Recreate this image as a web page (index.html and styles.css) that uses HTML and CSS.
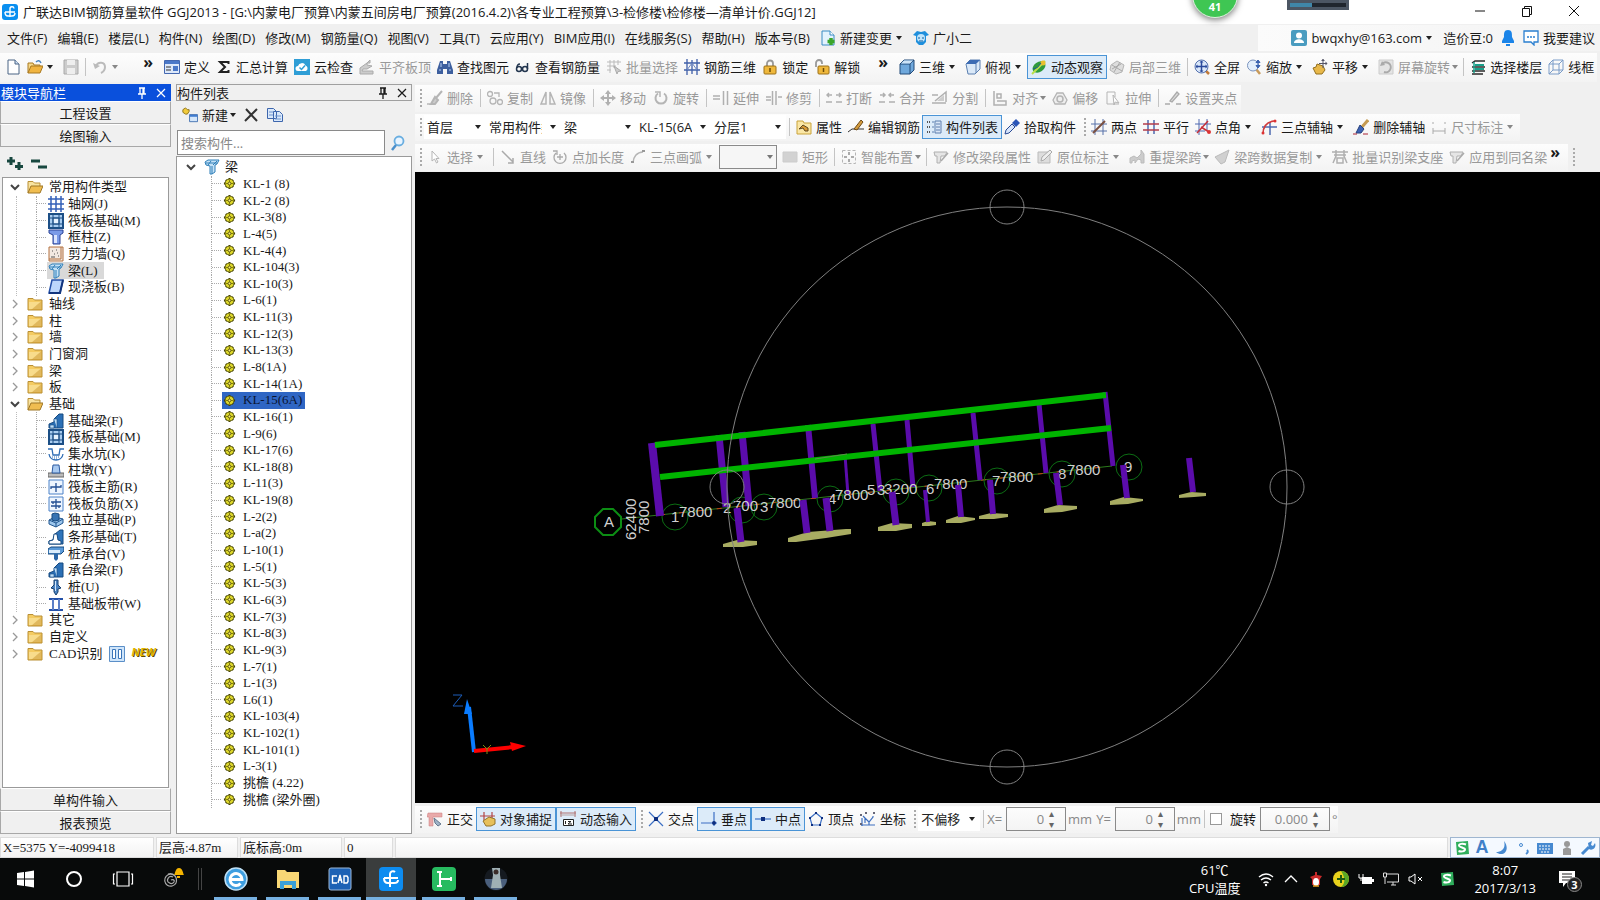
FILE: index.html
```html
<!DOCTYPE html>
<html lang="zh-CN">
<head>
    <meta charset="UTF-8">
    <meta name="viewport" content="width=device-width, initial-scale=1.0">
    <title>广联达BIM钢筋算量软件 GGJ2013</title>
    <link rel="stylesheet" href="styles.css">
</head>
<body>
    <!-- icon set -->
    <svg class="sprite" aria-hidden="true">
        <symbol id="logo" viewBox="0 0 16 16"><rect width="16" height="16" rx="3" fill="#0a8ff0"/><path d="M8 13V5a2 2 0 0 1 4-.5M3 8h10M3 8c0 3 1.5 4 3 4h4c2 0 3-1 3-3" fill="none" stroke="#fff" stroke-width="1.4"/></symbol>
        <symbol id="page" viewBox="0 0 16 16"><path d="M3 1h7l4 4v10H3z" fill="#fff" stroke="#4a6585"/><path d="M10 1v4h4" fill="#cfe0f5" stroke="#4a6585"/></symbol>
        <symbol id="pageadd" viewBox="0 0 16 16"><path d="M2 1h8l4 4v10H2z" fill="#e3f2fd" stroke="#3b8cc4"/><path d="M10 1v4h4" fill="#fff" stroke="#3b8cc4"/><path d="M11 8v7M7.5 11.5h7" stroke="#3aa52a" stroke-width="3.5"/></symbol>
        <symbol id="open" viewBox="0 0 16 16"><path d="M1 14V4h5l1 2h6v2" fill="#f7d98a" stroke="#a87820"/><path d="M1 14l3-7h12l-3 7z" fill="#f0b440" stroke="#a87820"/><path d="M9 3q3-3 5 1" fill="none" stroke="#4d86c0" stroke-width="1.5"/></symbol>
        <symbol id="folder" viewBox="0 0 16 16"><path d="M1 4V2.5h5L7.500 4H15v10H1z" fill="#f4cb62" stroke="#b98f35"/><path d="M2 6h12v7H2z" fill="#f8dc8c"/><path d="M14.5 5v9H4z" fill="#c8942e" opacity=".5"/></symbol>
        <symbol id="save" viewBox="0 0 16 16"><path d="M1 1h14v14H1z" fill="#ccc" stroke="#aaa"/><path d="M4 1h8v5H4zM4 9h8v6H4z" fill="#eee"/></symbol>
        <symbol id="undo" viewBox="0 0 16 16"><path d="M4 7c2-5 9-4 9 1 0 3-2 5-4 6" fill="none" stroke="#bbb" stroke-width="2"/><path d="M1 4l2 6 5-3z" fill="#bbb"/></symbol>
        <symbol id="define" viewBox="0 0 16 16"><path d="M.5 1.5h15v13H.5z" fill="#dce8fa" stroke="#4468b0"/><path d="M1 2h14v3H1z" fill="#4a78c8"/><path d="M2 8h5M2 11h5" stroke="#333"/><path d="M9 7h5v5H9z" fill="#4a78c8"/></symbol>
        <symbol id="sigma" viewBox="0 0 16 16"><path d="M12.5 5V3H4l5 5-5 5h8.500v-2" fill="none" stroke="#222" stroke-width="2"/></symbol>
        <symbol id="cloudcheck" viewBox="0 0 16 16"><path d="M0 0h16v16H0z" fill="#2f9ed6"/><path d="M4 12a2.5 2.5 0 0 1 0-5 4 4 0 0 1 7.5-.5A3 3 0 0 1 12 12z" fill="#fff"/><path d="M5.5 8.500l2 2 3.5-4" fill="none" stroke="#2f9ed6" stroke-width="1.5"/></symbol>
        <symbol id="aligntop" viewBox="0 0 16 16"><path d="M1 9l7-5 3-3v3H8v2l5 1-5 3H4l-1 2h11v3H1z" fill="#ccc" stroke="#aaa"/></symbol>
        <symbol id="binocular" viewBox="0 0 16 16"><path d="M3 2h3v3h4V2h3l3 9v4h-6v-5H6v5H0v-4z" fill="#3d5f9e"/><path d="M2 11h2M12 11h2M4 4v4M12 4v4" stroke="#b9d1f5"/></symbol>
        <symbol id="glasses" viewBox="0 0 16 16"><g fill="none" stroke="#23364f" stroke-width="1.5"><circle cx="4" cy="10" r="2.5"/><circle cx="10" cy="10" r="2.5"/><path d="M2 9c0-3 1-4 3-4M12.5 10V4"/></g></symbol>
        <symbol id="batch" viewBox="0 0 16 16"><path d="M1 3h14M1 7h9M4 1v13M8 1v8M12 1v5M1 11h4" stroke="#bbb" fill="none"/><path d="M8 7l7 5-3 .5L11 15z" fill="#ccc" stroke="#aaa"/></symbol>
        <symbol id="rebar" viewBox="0 0 16 16"><path d="M0 4h16M0 11h16M3 0v16M8 1v14M13 0v16" stroke="#3f5fa8" stroke-width="1.3"/><path d="M3 11l5-7 5 7" stroke="#6c86bf" fill="none"/></symbol>
        <symbol id="lock" viewBox="0 0 16 16"><path d="M5 8V4.500a3 3 0 0 1 6 0V8" fill="none" stroke="#999" stroke-width="1.8"/><rect x="2" y="7" width="12" height="8" rx="1" fill="#efb83c" stroke="#9c7018"/><path d="M8 9v4" stroke="#6d4c08" stroke-width="1.5"/></symbol>
        <symbol id="unlock" viewBox="0 0 16 16"><path d="M2 8V4a3 3 0 0 1 6 0v1" fill="none" stroke="#999" stroke-width="1.8"/><rect x="4" y="7" width="11" height="8" rx="1" fill="#efb83c" stroke="#9c7018"/><path d="M9.5 9v4" stroke="#6d4c08" stroke-width="1.5"/></symbol>
        <symbol id="cube" viewBox="0 0 16 16"><path d="M1 5l4-4h10v10l-4 4H1z" fill="#6fa8dc" stroke="#234a78"/><path d="M1 5h10v10M11 5l4-4" fill="none" stroke="#234a78"/><path d="M2 4.500l3-3h9l-3 3z" fill="#cde3f7"/></symbol>
        <symbol id="topview" viewBox="0 0 16 16"><path d="M1 5l4-4h10v9l-5 5H3z" fill="#dbe9f8" stroke="#5a7fb0"/><path d="M1 5l4-4h10l-4 4z" fill="#3d6cb4"/><path d="M11 5v9" stroke="#5a7fb0"/></symbol>
        <symbol id="orbit" viewBox="0 0 16 16"><ellipse cx="8" cy="8" rx="7" ry="5" fill="#2f9b3c" transform="rotate(-35 8 8)"/><path d="M1 15L14 2" stroke="#b9e04a" stroke-width="2"/><circle cx="12" cy="4" r="2.5" fill="#e9c02f"/><path d="M2 10q5 0 8-6" stroke="#1d5d8f" fill="none"/></symbol>
        <symbol id="partial" viewBox="0 0 16 16"><path d="M2 6l6-4 7 4-2 7-6 2-6-4z" fill="#ddd" stroke="#b5b5b5"/><path d="M3 6l10 6M5 13l6-10M3 10l9-5" stroke="#aaa"/></symbol>
        <symbol id="full" viewBox="0 0 16 16"><path d="M11 11l4 4" stroke="#c07a3a" stroke-width="2.5"/><circle cx="7.5" cy="7.500" r="6.5" fill="#dbe8fa" stroke="#5471ae"/><path d="M7.5 2v11M2 7.500h11" stroke="#2b4a9c" stroke-width="1.5"/><path d="M7.5 1.500l2 2h-4zM7.500 13.500l2-2h-4zM1.500 7.500l2-2v4zM13.500 7.500l-2-2v4z" fill="#2b4a9c"/></symbol>
        <symbol id="zoom" viewBox="0 0 16 16"><path d="M10 10l4 5" stroke="#c89a5a" stroke-width="2.5"/><circle cx="7" cy="6.500" r="5.5" fill="#e4effc" stroke="#7b93bd"/><path d="M12 2v6M12 1l2 2.500h-4zM12 9l2-2.500h-4z" fill="#3a62b0" stroke="#3a62b0"/></symbol>
        <symbol id="pan" viewBox="0 0 16 16"><path d="M1 9l3-1 1-3 6 2 2 4-3 4H4z" fill="#e8b84a" stroke="#94701f"/><path d="M11 0v9M7 4.500h8" stroke="#556"/><path d="M11 0l2 2H9zM15.500 4.500l-2-2v4z" fill="#556"/></symbol>
        <symbol id="screenrot" viewBox="0 0 16 16"><path d="M1 1h14v14H1z" fill="#e4e4e4" stroke="#ccc"/><path d="M4 5a5 5 0 1 1 2 8" fill="none" stroke="#aaa" stroke-width="2"/><path d="M2 7l2-5 3 4z" fill="#aaa"/></symbol>
        <symbol id="floors" viewBox="0 0 16 16"><path d="M2 4l3-2h10M2 8h13M2 12h13M2 15h11" stroke="#2b2b2b" stroke-width="1.5" fill="none"/><path d="M5 6h9M5 10h9" stroke="#19a08a" stroke-width="2"/><path d="M4 3v11" stroke="#19a08a" stroke-width="1.5"/></symbol>
        <symbol id="wire" viewBox="0 0 16 16"><path d="M1 5l4-4h10v10l-4 4H1zM1 5h10v10M11 5l4-4M5 1v10h10M5 11l-4 4" fill="none" stroke="#7a9cc8"/></symbol>
        <symbol id="brush" viewBox="0 0 16 16"><path d="M15 1L9 8M8 7l3 3-3 4H4z" fill="#ccc" stroke="#b5b5b5" stroke-width="2"/><path d="M0 14h3" stroke="#999"/></symbol>
        <symbol id="copy" viewBox="0 0 16 16"><g fill="none" stroke="#b5b5b5" stroke-width="1.3"><circle cx="3" cy="4" r="2.5"/><circle cx="6" cy="11" r="3"/><circle cx="13" cy="12" r="2.5"/><path d="M7 3h5v4"/></g></symbol>
        <symbol id="mirror" viewBox="0 0 16 16"><path d="M6 2v12H1zM10 2v12h5z" fill="none" stroke="#b5b5b5" stroke-width="1.5"/></symbol>
        <symbol id="move" viewBox="0 0 16 16"><path d="M8 3v10M3 8h10" stroke="#b0b0b0" stroke-width="2"/><path d="M8 0l3 4H5zM8 16l3-4H5zM0 8l4-3v6zM16 8l-4-3v6z" fill="#b0b0b0"/></symbol>
        <symbol id="rotate" viewBox="0 0 16 16"><path d="M11 3.500a5.5 5.5 0 1 1-6 0" fill="none" stroke="#b5b5b5" stroke-width="2"/><path d="M2 2h5v5" fill="none" stroke="#b5b5b5" stroke-width="1.5"/></symbol>
        <symbol id="extend" viewBox="0 0 16 16"><path d="M0 6h7M0 9h7" stroke="#b0b0b0" stroke-width="1.5"/><path d="M10.5 1v14M14.500 1v14" stroke="#b0b0b0" stroke-width="1.5"/></symbol>
        <symbol id="trim" viewBox="0 0 16 16"><path d="M6.5 1v14M10 1v14M0 7h5M12 7h4M0 10h5" stroke="#b0b0b0" stroke-width="1.5"/></symbol>
        <symbol id="break" viewBox="0 0 16 16"><path d="M0 12h6M10 12h6M1 5h5M10 5h5M3 3L1 5l2 2M13 3l2 2-2 2" stroke="#b0b0b0" fill="none" stroke-width="1.5"/></symbol>
        <symbol id="merge" viewBox="0 0 16 16"><path d="M0 12h6M10 12h6M1 5h5M10 5h5M4 3l2 2-2 2M12 3l-2 2 2 2" stroke="#b0b0b0" fill="none" stroke-width="1.5"/></symbol>
        <symbol id="split" viewBox="0 0 16 16"><path d="M0 5h6M0 13h14M3 11L14 2v10" stroke="#b0b0b0" fill="none" stroke-width="1.5"/><path d="M5 11l7-6v6z" fill="#ccc"/></symbol>
        <symbol id="align" viewBox="0 0 16 16"><path d="M2 1v14h12v-4H5M5 8V4h4v4z" stroke="#b0b0b0" fill="none" stroke-width="1.5"/></symbol>
        <symbol id="offset" viewBox="0 0 16 16"><path d="M5 3h6l4 7-2 4H3l-2-4z" fill="#eee" stroke="#b5b5b5" stroke-width="1.3"/><circle cx="8" cy="9" r="3" fill="none" stroke="#b5b5b5" stroke-width="1.5"/></symbol>
        <symbol id="stretch" viewBox="0 0 16 16"><path d="M2 14V2h8v5M2 14h12" stroke="#b5b5b5" fill="none"/><path d="M8 5l6 8-4-1-1 3z" fill="#fff" stroke="#b5b5b5"/></symbol>
        <symbol id="grippt" viewBox="0 0 16 16"><path d="M0 14h5M11 14h5M5 11L12 2l2 2-7 8z" stroke="#aaa" fill="#ddd" stroke-width="1.3"/></symbol>
        <symbol id="prop" viewBox="0 0 16 16"><path d="M1 2h6l1 2h7v11H1z" fill="#fbe7a6" stroke="#c9a33a"/><path d="M3 10l4-4 5 3v3H9L7 9z" fill="#d99a35" stroke="#5e4820"/></symbol>
        <symbol id="editbar" viewBox="0 0 16 16"><path d="M0 13l4-3h12" stroke="#333" fill="none"/><path d="M6 10l7-9 2 2-6 8z" fill="#d49b3c" stroke="#6d4a18"/></symbol>
        <symbol id="complist" viewBox="0 0 16 16"><path d="M1 3h3M1 8h3M1 13h3" stroke="#555" stroke-dasharray="1 1" stroke-width="2"/><path d="M9 2h6v12H9z" fill="#d9e6f7" stroke="#5d7fae"/><path d="M10 5h4M10 8h4M10 11h4M6 3h2M6 8h2M6 13h2" stroke="#5d7fae"/></symbol>
        <symbol id="picker" viewBox="0 0 16 16"><path d="M1 15l1-4 6-6 3 3-6 6z" fill="#d7e5fb" stroke="#2a4a94"/><path d="M8 4l4-4 4 4-4 4z" fill="#2a55b8"/></symbol>
        <symbol id="twopt" viewBox="0 0 16 16"><path d="M4 0v16M12 0v16M0 5h16M0 12h16" stroke="#5670a8"/><path d="M2 14L14 2" stroke="#7a5040" stroke-width="2"/></symbol>
        <symbol id="parallel" viewBox="0 0 16 16"><path d="M5 1v14M11 1v14" stroke="#4e69b0" stroke-width="1.5"/><path d="M0 5h16M0 11h16" stroke="#b33c4c" stroke-width="1.5"/></symbol>
        <symbol id="ptangle" viewBox="0 0 16 16"><path d="M4 0v16M12 0v11M0 5h16M0 12h10" stroke="#4e69b0"/><path d="M2 14L13 2M6 8l8 5" stroke="#c62f3a" stroke-width="1.5"/><circle cx="14" cy="13" r="2" fill="#d33"/></symbol>
        <symbol id="threept" viewBox="0 0 16 16"><path d="M9 3v13M1 8h15" stroke="#4e69b0" stroke-width="1.5"/><path d="M2 15C2 8 5 3 13 2" fill="none" stroke="#d03b3b" stroke-width="1.5"/><circle cx="14" cy="2" r="1.5" fill="#d33"/><circle cx="2" cy="14" r="1.5" fill="#d33"/></symbol>
        <symbol id="delaxis" viewBox="0 0 16 16"><path d="M15 1L9 8" stroke="#c59b53" stroke-width="3"/><path d="M7 6l4 4-3 4H3z" fill="#3e63b4" stroke="#26407c"/><path d="M0 15h4M10 15h5" stroke="#a23"/></symbol>
        <symbol id="dim" viewBox="0 0 16 16"><path d="M2 9v6M14 9v6M2 12h12M1 4h2M13 4h2" stroke="#aaa" fill="none"/></symbol>
        <symbol id="cursor" viewBox="0 0 16 16"><path d="M5 2v10l2.500-2 2 4 1.500-1-2-3.500h3z" fill="#fff" stroke="#b5b5b5"/></symbol>
        <symbol id="line" viewBox="0 0 16 16"><path d="M2 2l11 11M13 9v5H8" fill="none" stroke="#aaa" stroke-width="1.5"/></symbol>
        <symbol id="ptlen" viewBox="0 0 16 16"><path d="M4 4a6 6 0 1 0 8 0M8 5v6M5 8h6M1 2h4v4" fill="none" stroke="#aaa" stroke-width="1.3"/></symbol>
        <symbol id="arc" viewBox="0 0 16 16"><path d="M3 14C3 8 7 3 13 3" fill="none" stroke="#b5b5b5" stroke-width="1.5"/><path d="M1 13h3M12 2h3" stroke="#999" stroke-width="2"/></symbol>
        <symbol id="rect" viewBox="0 0 16 16"><path d="M1 3h14v10H1z" fill="#d2d2d2" stroke="#ccc"/></symbol>
        <symbol id="smart" viewBox="0 0 16 16"><path d="M1.5 1.500h13v13h-13z" fill="none" stroke="#b5b5b5" stroke-dasharray="3 2"/><path d="M8 3v3M8 10v3M3 8h3M10 8h3" stroke="#aaa" stroke-width="2"/></symbol>
        <symbol id="beamg" viewBox="0 0 16 16"><path d="M1 3h13l-2 4H8l-1 7H4V7H2z" fill="#e5e5e5" stroke="#b0b0b0"/><path d="M8 12l7-8" stroke="#aaa" stroke-width="1.5"/></symbol>
        <symbol id="note" viewBox="0 0 16 16"><path d="M1 3h12v11H1z" fill="#ddd" stroke="#bbb"/><path d="M4 12l1-4 8-7 2 2-8 8z" fill="#eee" stroke="#aaa"/></symbol>
        <symbol id="span" viewBox="0 0 16 16"><path d="M1 14V9l4-2 3 2 4-4V1l3 4v9h-3v-3l-3-1-3 4v-3l-3 1v2z" fill="#ccc" stroke="#bbb"/></symbol>
        <symbol id="spancopy" viewBox="0 0 16 16"><path d="M15 1l-4 12-4 2-6-7 4-2z" fill="#d0d0d0" stroke="#bbb"/></symbol>
        <symbol id="support" viewBox="0 0 16 16"><path d="M0 3h16M4 1v6l-3 7M12 1v6l3 7M5 9h6v5H5zM2 6h12" fill="none" stroke="#b0b0b0" stroke-width="1.5"/></symbol>
        <symbol id="ortho" viewBox="0 0 16 16"><path d="M1 2h14v4H6v9H2V6H0z" fill="#e9aaaa" stroke="#c87878" stroke-width=".5"/><path d="M7 7l7 6-3 2-3-3z" fill="#9fb3c8" stroke="#65788e"/></symbol>
        <symbol id="snap" viewBox="0 0 16 16"><path d="M0 5h15M4 1v8M12 1v6" stroke="#b34545" stroke-width="1.2"/><path d="M3 10l6-4 6 2v5l-4 2H6z" fill="#e7c05a" stroke="#94742b"/></symbol>
        <symbol id="dyninput" viewBox="0 0 16 16"><path d="M0 2h16M1 0v6M15 0v6" stroke="#b07070"/><path d="M0 4h16" stroke="#b9a0a0"/><path d="M3.5 8.500h10v6h-10z" fill="#fff" stroke="#222"/><path d="M5.5 10v3M8 10.500h3l-3 2.500h4" stroke="#222" fill="none"/></symbol>
        <symbol id="xpt" viewBox="0 0 16 16"><path d="M1 1l14 14M15 1L1 15" stroke="#3c6fc4" stroke-width="1.2"/><path d="M6 6h4v4H6z" fill="#0e2f80"/></symbol>
        <symbol id="perp" viewBox="0 0 16 16"><path d="M13 1v14M0 12h16" stroke="#3c6fc4" stroke-width="1.2"/><circle cx="13" cy="12" r="2" fill="#0e2f80"/></symbol>
        <symbol id="midpt" viewBox="0 0 16 16"><path d="M0 8h16" stroke="#3c6fc4" stroke-width="1.2"/><path d="M6 6h4v4H6z" fill="#0e2f80"/></symbol>
        <symbol id="vertex" viewBox="0 0 16 16"><path d="M8 2l6 5-2 7H4L2 7z" fill="none" stroke="#3c6fc4" stroke-width="1.2"/><path d="M7 1h2v2H7zM13 6h2v2h-2zM1 6h2v2H1zM3 13h2v2H3zM11 13h2v2h-2z" fill="#0e2f80"/></symbol>
        <symbol id="coord" viewBox="0 0 16 16"><path d="M2 7v8M1 14h14M5 12V7l4 4 4-5v-1M9 11v3M5 7l-2-2" stroke="#3d6fc0" fill="none" stroke-width="1.2"/><path d="M5 1h2v2H5zM13 1h2v2h-2zM0 3h2v2H0zM0 12h2v2H0z" fill="#667"/></symbol>
        <symbol id="new" viewBox="0 0 18 16"><path d="M4 0l2 2h2v2L6 7H4L1 5V2z" fill="#f2cb3b" stroke="#8a6d10"/><path d="M8.5 7.500h9v8h-9z" fill="#d4e6fa" stroke="#3e6caf"/><path d="M9 8h8v2H9z" fill="#3e7bd0"/></symbol>
        <symbol id="cross" viewBox="0 0 16 16"><path d="M3 2l11 12M14 2L2 14" stroke="#333" stroke-width="2"/></symbol>
        <symbol id="docs" viewBox="0 0 16 16"><path d="M.5 1.500h6l3 3v7h-9zM6.500 4.500h6l3 3v7h-9z" fill="#d9e8fb" stroke="#3d66ad"/><path d="M8 9h6M8 12h6M2 5h4M2 8h4" stroke="#6d93cf"/></symbol>
        <symbol id="search" viewBox="0 0 16 16"><circle cx="9" cy="6" r="4.5" fill="#e8f4ff" stroke="#6aaee0" stroke-width="1.8"/><path d="M6 10l-4 5" stroke="#4a8fcb" stroke-width="2.5"/></symbol>
        <symbol id="pin" viewBox="0 0 12 12"><path d="M3 1h6M4 1v6M8 1v6M7 1v6M2 7h8M6 7v5" stroke="currentColor" stroke-width="1.3"/></symbol>
        <symbol id="close" viewBox="0 0 12 12"><path d="M2 2l8 8M10 2l-8 8" stroke="currentColor" stroke-width="1.2"/></symbol>
        <symbol id="plus2" viewBox="0 0 18 16"><path d="M5 1v8M1 5h8M13 6v8M9 10.500h8" stroke="#17473f" stroke-width="3"/></symbol>
        <symbol id="minus2" viewBox="0 0 18 16"><path d="M1 5h9M8 11h9" stroke="#17473f" stroke-width="3"/></symbol>
        <symbol id="open2" viewBox="0 0 16 16"><path d="M1 14V2.500h5L7.500 4H13v3" fill="#f8e3a0" stroke="#b98f35"/><path d="M1 14l3-7h12l-3 7z" fill="#f0bd50" stroke="#9e7626"/></symbol>
        <symbol id="down" viewBox="0 0 10 10"><path d="M1 3l4 4 4-4" fill="none" stroke="#444" stroke-width="2"/></symbol>
        <symbol id="right" viewBox="0 0 10 10"><path d="M3 1l4 4-4 4" fill="none" stroke="#999" stroke-width="1.3"/></symbol>
        <symbol id="gear" viewBox="0 0 14 14"><path d="M7 1v12M1 7h12M3 3l8 8M11 3l-8 8" stroke="#3a3a00" stroke-width="2"/><circle cx="7" cy="7" r="4.800" fill="#dcd62a" stroke="#55520a"/><path d="M7 3v8M3 7h8" stroke="#6a6600" stroke-width=".8"/><circle cx="7" cy="7" r="1.5" fill="#fff27a" stroke="#55520a"/></symbol>
        <symbol id="beam" viewBox="0 0 16 16"><path d="M1 3l3-2h11l-2 4-2 1v7l-3 2H6V7L2 6z" fill="#c5e2f7" stroke="#2f7fb8"/><path d="M2 4h11M8 7v8M4 6l3-4M9 6l4-4" stroke="#2f7fb8"/></symbol>
        <symbol id="grid" viewBox="0 0 16 16"><path d="M0 3h16M0 8h16M0 13h16M3 0v16M8 0v16M13 0v16" stroke="#3460b8" stroke-width="1.5"/></symbol>
        <symbol id="raft" viewBox="0 0 16 16"><path d="M1 1h14v14H1z" fill="#a9cdf0" stroke="#1c4f86" stroke-width="2"/><path d="M5 5h6v6H5zM5 2v12M11 2v12M2 5h12M2 11h12" fill="#e7f3ff" stroke="#1c4f86"/></symbol>
        <symbol id="column" viewBox="0 0 16 16"><path d="M1 1h14v3l-3 2v9H5V6L1 4z" fill="#7a9ae8" stroke="#2c4496"/><path d="M6 6h3v8H6z" fill="#dbe5ff"/></symbol>
        <symbol id="wall" viewBox="0 0 16 16"><path d="M1 1h14v14H1z" fill="#f2e9e2" stroke="#b3713f"/><path d="M13 1v12H1" stroke="#b3713f" fill="none"/><path d="M4 5h1M8 4h1M6 8h1M10 10h1M3 11h4M9 7h1" stroke="#555"/></symbol>
        <symbol id="slab" viewBox="0 0 16 16"><path d="M4 1h11l-3 13H1z" fill="#bcd6fb" stroke="#2450a8" stroke-width="1.5"/><path d="M1 14h11l3-13" fill="none" stroke="#12357e" stroke-width="2"/></symbol>
        <symbol id="fbeam" viewBox="0 0 16 16"><path d="M1 15v-4l5-2V6l5-5h4v14z" fill="#2b6fb5" stroke="#174a80"/><path d="M6 6h3v9M2 12h4v3H2z" fill="#bfe0fa" stroke="#174a80" stroke-width=".6"/></symbol>
        <symbol id="pit" viewBox="0 0 16 16"><path d="M0 3h4l1 6h6l1-6h4M1 8c1 8 13 8 14 0" fill="none" stroke="#2f6db5" stroke-width="1.3"/><path d="M4 11h8M6 13h4" stroke="#2f6db5" stroke-dasharray="1 1"/></symbol>
        <symbol id="pier" viewBox="0 0 16 16"><path d="M0 11h16v4H0z" fill="#bbb" stroke="#666"/><path d="M5 3h6l1 8H4z" fill="#a8c9f0" stroke="#2c5aa0"/></symbol>
        <symbol id="main" viewBox="0 0 16 16"><path d="M1 1h14v14H1z" fill="#eef6ff" stroke="#4d82c8"/><path d="M8 4v9M3 10V8h10V6" stroke="#234f94" fill="none" stroke-width="1.3"/></symbol>
        <symbol id="neg" viewBox="0 0 16 16"><path d="M1 1h14v14H1z" fill="#eef6ff" stroke="#4d82c8"/><path d="M8 3v10M3 6h10M3 10h10M5 6v2M11 10v2" stroke="#234f94" fill="none" stroke-width="1.3"/></symbol>
        <symbol id="indep" viewBox="0 0 16 16"><path d="M1 8l6-3 8 2v4l-7 4-7-3z" fill="#9cc6ec" stroke="#1f558f"/><path d="M4 2l3-1 4 1v6l-4 1-3-1z" fill="#3673b3" stroke="#174a80"/><path d="M1 8l7 3 7-4M8 11v4" fill="none" stroke="#1f558f"/></symbol>
        <symbol id="strip" viewBox="0 0 16 16"><path d="M1 15v-3l4-1 2-6 5-4h3v14z" fill="#2f74ba" stroke="#174a80"/><path d="M1 15v-3l4-1 1-6h3l1 6 3 1v3z" fill="#fff" stroke="#174a80"/></symbol>
        <symbol id="cap" viewBox="0 0 16 16"><path d="M0 3l3-2h13v4l-3 3H0z" fill="#5b9ad8" stroke="#174a80"/><path d="M1 4h11v3H1z" fill="#d9ecfc"/><path d="M6 8h4v5l-2 2-2-2z" fill="#2b67a8"/></symbol>
        <symbol id="pile" viewBox="0 0 16 16"><path d="M6 1h4v5l3 3-3 1v3l-2 3-2-3v-3L3 9l3-3z" fill="#4c83c0" stroke="#17406f"/><path d="M7.5 2v10" stroke="#d3e8fb"/></symbol>
        <symbol id="band" viewBox="0 0 16 16"><path d="M1 3h14M1 14h14" stroke="#2450a8" stroke-width="2"/><path d="M5 3v11M11 3v11" stroke="#5b7fc8" stroke-width="2"/></symbol>
        <symbol id="sogou" viewBox="0 0 16 16"><path d="M2 2l12-1 1 13-12 1z" fill="#2fae5c"/><path d="M12 4.500c-3-1-7-1-7 1s6 2 6 4-4 2.500-6.500 1.500" fill="none" stroke="#fff" stroke-width="2"/></symbol>
    </svg>

    <div class="window">
        <header class="titlebar">
            <svg class="icon"><use href="#logo"/></svg>
            <h1>广联达BIM钢筋算量软件 GGJ2013 - [G:\内蒙电厂预算\内蒙五间房电厂预算(2016.4.2)\各专业工程预算\3-检修楼\检修楼—清单计价.GGJ12]</h1>
            <div class="ball">41</div>
            <div class="gauge"></div>
            <div class="winbuttons">
                <button aria-label="最小化"><svg viewBox="0 0 12 12"><path d="M1 6h10" stroke="#111"/></svg></button>
                <button aria-label="还原"><svg viewBox="0 0 12 12"><path d="M1.5 3.500h7v8h-7zM3.500 3V1.500h7v8H9" fill="none" stroke="#111"/></svg></button>
                <button aria-label="关闭"><svg viewBox="0 0 12 12"><path d="M1 1l10 10M11 1L1 11" stroke="#111"/></svg></button>
            </div>
        </header>

        <nav class="menubar">
            <button>文件(F)</button><button>编辑(E)</button><button>楼层(L)</button><button>构件(N)</button><button>绘图(D)</button><button>修改(M)</button><button>钢筋量(Q)</button><button>视图(V)</button><button>工具(T)</button><button>云应用(Y)</button><button>BIM应用(I)</button><button>在线服务(S)</button><button>帮助(H)</button><button>版本号(B)</button>
            <button class="tool"><svg class="icon"><use href="#pageadd"/></svg>新建变更<i class="arrow"></i></button>
            <button class="tool"><svg class="icon" viewBox="0 0 16 16"><path d="M0 5l4-4 4 1 4-1 4 4-3 1v6l-3 3H6l-3-3V6z" fill="#1f8fdc"/><circle cx="8" cy="8" r="4" fill="#bfe4fb"/><path d="M6 7v2M10 7v2M6 11h4" stroke="#0d5d9c"/></svg>广小二</button>
            <div class="account">
                <button class="tool"><svg class="icon" viewBox="0 0 16 16"><rect width="16" height="16" rx="2" fill="#4a9cc0"/><circle cx="8" cy="5.500" r="3" fill="#fff"/><path d="M3 13c0-5 10-5 10 0z" fill="#fff"/></svg>bwqxhy@163.com<i class="arrow"></i></button>
                <button class="tool">造价豆:0</button>
                <button class="tool" aria-label="消息"><svg class="icon" viewBox="0 0 16 16"><path d="M8 0c4 0 4 3 4 7l2 4v2H2v-2l2-4c0-4 0-7 4-7zM6 14h4v2H6z" fill="#1b84e8"/></svg></button>
                <button class="tool"><svg class="icon" viewBox="0 0 16 16"><path d="M1 1h14v11h-4v3l-3-3H1z" fill="#fff" stroke="#2a7fd0" stroke-width="1.3"/><path d="M4 7h8" stroke="#2a7fd0" stroke-width="1.5" stroke-dasharray="2 1"/></svg>我要建议</button>
            </div>
        </nav>

        <div class="toolbar top">
            <div class="group file">
                <button class="tool" aria-label="新建"><svg class="icon"><use href="#page"/></svg></button>
                <button class="tool" aria-label="打开"><svg class="icon"><use href="#open"/></svg><i class="arrow"></i></button>
                <button class="tool" aria-label="保存" disabled><svg class="icon"><use href="#save"/></svg></button>
                <span class="sep"></span>
                <button class="tool" aria-label="撤销" disabled><svg class="icon"><use href="#undo"/></svg><i class="arrow"></i></button>
                <span class="more">»</span>
            </div>
            <div class="group common">
                <button class="tool"><svg class="icon"><use href="#define"/></svg>定义</button>
                <button class="tool"><svg class="icon"><use href="#sigma"/></svg>汇总计算</button>
                <button class="tool"><svg class="icon"><use href="#cloudcheck"/></svg>云检查</button>
                <button class="tool" disabled><svg class="icon"><use href="#aligntop"/></svg>平齐板顶</button>
                <button class="tool"><svg class="icon"><use href="#binocular"/></svg>查找图元</button>
                <button class="tool"><svg class="icon"><use href="#glasses"/></svg>查看钢筋量</button>
                <button class="tool" disabled><svg class="icon"><use href="#batch"/></svg>批量选择</button>
                <button class="tool"><svg class="icon"><use href="#rebar"/></svg>钢筋三维</button>
                <button class="tool"><svg class="icon"><use href="#lock"/></svg>锁定</button>
                <button class="tool"><svg class="icon"><use href="#unlock"/></svg>解锁</button>
                <span class="more">»</span>
            </div>
            <div class="group">
                <button class="tool"><svg class="icon"><use href="#cube"/></svg>三维<i class="arrow"></i></button>
                <button class="tool"><svg class="icon"><use href="#topview"/></svg>俯视<i class="arrow"></i></button>
                <button class="tool active"><svg class="icon"><use href="#orbit"/></svg>动态观察</button>
                <button class="tool" disabled><svg class="icon"><use href="#partial"/></svg>局部三维</button>
                <span class="sep"></span>
                <button class="tool"><svg class="icon"><use href="#full"/></svg>全屏</button>
                <button class="tool"><svg class="icon"><use href="#zoom"/></svg>缩放<i class="arrow"></i></button>
                <button class="tool"><svg class="icon"><use href="#pan"/></svg>平移<i class="arrow"></i></button>
                <button class="tool" disabled><svg class="icon"><use href="#screenrot"/></svg>屏幕旋转<i class="arrow tight"></i></button>
                <span class="sep"></span>
                <button class="tool"><svg class="icon"><use href="#floors"/></svg>选择楼层</button>
                <button class="tool"><svg class="icon"><use href="#wire"/></svg>线框</button>
            </div>
        </div>

        <main>
            <aside class="panel nav">
                <div class="panel-head blue"><span>模块导航栏</span><svg><use href="#pin"/></svg><svg><use href="#close"/></svg></div>
                <button class="section">工程设置</button>
                <button class="section">绘图输入</button>
                <div class="nav-tools">
                    <button aria-label="全部展开"><svg><use href="#plus2"/></svg></button>
                    <button aria-label="全部折叠"><svg><use href="#minus2"/></svg></button>
                </div>
                <ul class="tree nav-tree">
                    <li><svg class="caret"><use href="#down"/></svg><svg class="icon"><use href="#open2"/></svg>常用构件类型</li>
                    <li class="child"><span><svg class="icon"><use href="#grid"/></svg>轴网(J)</span></li>
                    <li class="child"><span><svg class="icon"><use href="#raft"/></svg>筏板基础(M)</span></li>
                    <li class="child"><span><svg class="icon"><use href="#column"/></svg>框柱(Z)</span></li>
                    <li class="child"><span><svg class="icon"><use href="#wall"/></svg>剪力墙(Q)</span></li>
                    <li class="child current"><span><svg class="icon"><use href="#beam"/></svg>梁(L)</span></li>
                    <li class="child last"><span><svg class="icon"><use href="#slab"/></svg>现浇板(B)</span></li>
                    <li><svg class="caret"><use href="#right"/></svg><svg class="icon"><use href="#folder"/></svg>轴线</li>
                    <li><svg class="caret"><use href="#right"/></svg><svg class="icon"><use href="#folder"/></svg>柱</li>
                    <li><svg class="caret"><use href="#right"/></svg><svg class="icon"><use href="#folder"/></svg>墙</li>
                    <li><svg class="caret"><use href="#right"/></svg><svg class="icon"><use href="#folder"/></svg>门窗洞</li>
                    <li><svg class="caret"><use href="#right"/></svg><svg class="icon"><use href="#folder"/></svg>梁</li>
                    <li><svg class="caret"><use href="#right"/></svg><svg class="icon"><use href="#folder"/></svg>板</li>
                    <li><svg class="caret"><use href="#down"/></svg><svg class="icon"><use href="#open2"/></svg>基础</li>
                    <li class="child"><span><svg class="icon"><use href="#fbeam"/></svg>基础梁(F)</span></li>
                    <li class="child"><span><svg class="icon"><use href="#raft"/></svg>筏板基础(M)</span></li>
                    <li class="child"><span><svg class="icon"><use href="#pit"/></svg>集水坑(K)</span></li>
                    <li class="child"><span><svg class="icon"><use href="#pier"/></svg>柱墩(Y)</span></li>
                    <li class="child"><span><svg class="icon"><use href="#main"/></svg>筏板主筋(R)</span></li>
                    <li class="child"><span><svg class="icon"><use href="#neg"/></svg>筏板负筋(X)</span></li>
                    <li class="child"><span><svg class="icon"><use href="#indep"/></svg>独立基础(P)</span></li>
                    <li class="child"><span><svg class="icon"><use href="#strip"/></svg>条形基础(T)</span></li>
                    <li class="child"><span><svg class="icon"><use href="#cap"/></svg>桩承台(V)</span></li>
                    <li class="child"><span><svg class="icon"><use href="#fbeam"/></svg>承台梁(F)</span></li>
                    <li class="child"><span><svg class="icon"><use href="#pile"/></svg>桩(U)</span></li>
                    <li class="child last"><span><svg class="icon"><use href="#band"/></svg>基础板带(W)</span></li>
                    <li><svg class="caret"><use href="#right"/></svg><svg class="icon"><use href="#folder"/></svg>其它</li>
                    <li><svg class="caret"><use href="#right"/></svg><svg class="icon"><use href="#folder"/></svg>自定义</li>
                    <li><svg class="caret"><use href="#right"/></svg><svg class="icon"><use href="#folder"/></svg>CAD识别<svg class="icon cad" viewBox="0 0 16 16"><path d="M.5.5h15v15H.5z" fill="#cfe5fa" stroke="#5b8fc8"/><path d="M3.5 3.500h3v9h-3zM9.500 3.500h3v9h-3z" fill="#fff" stroke="#3a74b8"/></svg><b class="new">NEW</b></li>
                </ul>
                <button class="section">单构件输入</button>
                <button class="section">报表预览</button>
            </aside>

            <aside class="panel list">
                <div class="panel-head"><span>构件列表</span><svg><use href="#pin"/></svg><svg><use href="#close"/></svg></div>
                <div class="list-tools">
                    <button class="tool"><svg class="icon"><use href="#new"/></svg>新建<i class="arrow tight"></i></button>
                    <button class="tool" aria-label="删除"><svg class="icon"><use href="#cross"/></svg></button>
                    <button class="tool" aria-label="复制"><svg class="icon"><use href="#docs"/></svg></button>
                </div>
                <div class="search">
                    <input type="text" placeholder="搜索构件..." aria-label="搜索构件">
                    <button aria-label="搜索"><svg class="icon"><use href="#search"/></svg></button>
                </div>
                <ul class="tree list-tree">
                    <li><svg class="caret"><use href="#down"/></svg><svg class="icon"><use href="#beam"/></svg>梁</li>
                    <li class="child"><span><svg class="gear"><use href="#gear"/></svg>KL-1 (8)</span></li>
                    <li class="child"><span><svg class="gear"><use href="#gear"/></svg>KL-2 (8)</span></li>
                    <li class="child"><span><svg class="gear"><use href="#gear"/></svg>KL-3(8)</span></li>
                    <li class="child"><span><svg class="gear"><use href="#gear"/></svg>L-4(5)</span></li>
                    <li class="child"><span><svg class="gear"><use href="#gear"/></svg>KL-4(4)</span></li>
                    <li class="child"><span><svg class="gear"><use href="#gear"/></svg>KL-104(3)</span></li>
                    <li class="child"><span><svg class="gear"><use href="#gear"/></svg>KL-10(3)</span></li>
                    <li class="child"><span><svg class="gear"><use href="#gear"/></svg>L-6(1)</span></li>
                    <li class="child"><span><svg class="gear"><use href="#gear"/></svg>KL-11(3)</span></li>
                    <li class="child"><span><svg class="gear"><use href="#gear"/></svg>KL-12(3)</span></li>
                    <li class="child"><span><svg class="gear"><use href="#gear"/></svg>KL-13(3)</span></li>
                    <li class="child"><span><svg class="gear"><use href="#gear"/></svg>L-8(1A)</span></li>
                    <li class="child"><span><svg class="gear"><use href="#gear"/></svg>KL-14(1A)</span></li>
                    <li class="child selected"><span><svg class="gear"><use href="#gear"/></svg>KL-15(6A)</span></li>
                    <li class="child"><span><svg class="gear"><use href="#gear"/></svg>KL-16(1)</span></li>
                    <li class="child"><span><svg class="gear"><use href="#gear"/></svg>L-9(6)</span></li>
                    <li class="child"><span><svg class="gear"><use href="#gear"/></svg>KL-17(6)</span></li>
                    <li class="child"><span><svg class="gear"><use href="#gear"/></svg>KL-18(8)</span></li>
                    <li class="child"><span><svg class="gear"><use href="#gear"/></svg>L-11(3)</span></li>
                    <li class="child"><span><svg class="gear"><use href="#gear"/></svg>KL-19(8)</span></li>
                    <li class="child"><span><svg class="gear"><use href="#gear"/></svg>L-2(2)</span></li>
                    <li class="child"><span><svg class="gear"><use href="#gear"/></svg>L-a(2)</span></li>
                    <li class="child"><span><svg class="gear"><use href="#gear"/></svg>L-10(1)</span></li>
                    <li class="child"><span><svg class="gear"><use href="#gear"/></svg>L-5(1)</span></li>
                    <li class="child"><span><svg class="gear"><use href="#gear"/></svg>KL-5(3)</span></li>
                    <li class="child"><span><svg class="gear"><use href="#gear"/></svg>KL-6(3)</span></li>
                    <li class="child"><span><svg class="gear"><use href="#gear"/></svg>KL-7(3)</span></li>
                    <li class="child"><span><svg class="gear"><use href="#gear"/></svg>KL-8(3)</span></li>
                    <li class="child"><span><svg class="gear"><use href="#gear"/></svg>KL-9(3)</span></li>
                    <li class="child"><span><svg class="gear"><use href="#gear"/></svg>L-7(1)</span></li>
                    <li class="child"><span><svg class="gear"><use href="#gear"/></svg>L-1(3)</span></li>
                    <li class="child"><span><svg class="gear"><use href="#gear"/></svg>L6(1)</span></li>
                    <li class="child"><span><svg class="gear"><use href="#gear"/></svg>KL-103(4)</span></li>
                    <li class="child"><span><svg class="gear"><use href="#gear"/></svg>KL-102(1)</span></li>
                    <li class="child"><span><svg class="gear"><use href="#gear"/></svg>KL-101(1)</span></li>
                    <li class="child"><span><svg class="gear"><use href="#gear"/></svg>L-3(1)</span></li>
                    <li class="child"><span><svg class="gear"><use href="#gear"/></svg>挑檐 (4.22)</span></li>
                    <li class="child last"><span><svg class="gear"><use href="#gear"/></svg>挑檐 (梁外圈)</span></li>
                </ul>
            </aside>

            <section class="work">
                <div class="toolbar edit">
                    <div class="group">
                        <span class="grip"></span>
                        <button class="tool" disabled><svg class="icon"><use href="#brush"/></svg>删除</button>
                        <span class="sep"></span>
                        <button class="tool" disabled><svg class="icon"><use href="#copy"/></svg>复制</button>
                        <button class="tool" disabled><svg class="icon"><use href="#mirror"/></svg>镜像</button>
                        <span class="sep"></span>
                        <button class="tool" disabled><svg class="icon"><use href="#move"/></svg>移动</button>
                        <button class="tool" disabled><svg class="icon"><use href="#rotate"/></svg>旋转</button>
                        <span class="sep"></span>
                        <button class="tool" disabled><svg class="icon"><use href="#extend"/></svg>延伸</button>
                        <button class="tool" disabled><svg class="icon"><use href="#trim"/></svg>修剪</button>
                        <span class="sep"></span>
                        <button class="tool" disabled><svg class="icon"><use href="#break"/></svg>打断</button>
                        <button class="tool" disabled><svg class="icon"><use href="#merge"/></svg>合并</button>
                        <button class="tool" disabled><svg class="icon"><use href="#split"/></svg>分割</button>
                        <span class="sep"></span>
                        <button class="tool" disabled><svg class="icon"><use href="#align"/></svg>对齐<i class="arrow tight"></i></button>
                        <button class="tool" disabled><svg class="icon"><use href="#offset"/></svg>偏移</button>
                        <button class="tool" disabled><svg class="icon"><use href="#stretch"/></svg>拉伸</button>
                        <span class="sep"></span>
                        <button class="tool" disabled><svg class="icon"><use href="#grippt"/></svg>设置夹点</button>
                    </div>
                </div>
                <div class="toolbar">
                    <div class="group">
                        <span class="grip"></span>
                        <label class="combo small"><select aria-label="楼层"><option>首层</option></select></label>
                        <label class="combo"><select aria-label="构件类型"><option>常用构件类型</option></select></label>
                        <label class="combo"><select aria-label="构件种类"><option>梁</option></select></label>
                        <label class="combo"><select aria-label="构件"><option>KL-15(6A)</option></select></label>
                        <label class="combo"><select aria-label="分层"><option>分层1</option></select></label>
                        <span class="sep"></span>
                        <button class="tool"><svg class="icon"><use href="#prop"/></svg>属性</button>
                        <button class="tool"><svg class="icon"><use href="#editbar"/></svg>编辑钢筋</button>
                        <button class="tool active"><svg class="icon"><use href="#complist"/></svg>构件列表</button>
                        <button class="tool"><svg class="icon"><use href="#picker"/></svg>拾取构件</button>
                    </div>
                    <div class="group">
                        <span class="grip"></span>
                        <button class="tool"><svg class="icon"><use href="#twopt"/></svg>两点</button>
                        <button class="tool"><svg class="icon"><use href="#parallel"/></svg>平行</button>
                        <button class="tool"><svg class="icon"><use href="#ptangle"/></svg>点角<i class="arrow"></i></button>
                        <button class="tool"><svg class="icon"><use href="#threept"/></svg>三点辅轴<i class="arrow"></i></button>
                        <button class="tool"><svg class="icon"><use href="#delaxis"/></svg>删除辅轴</button>
                        <button class="tool" disabled><svg class="icon"><use href="#dim"/></svg>尺寸标注<i class="arrow"></i></button>
                    </div>
                </div>
                <div class="toolbar">
                    <div class="group">
                        <span class="grip"></span>
                        <button class="tool" disabled><svg class="icon"><use href="#cursor"/></svg>选择<i class="arrow"></i></button>
                        <span class="sep"></span>
                        <button class="tool" disabled><svg class="icon"><use href="#line"/></svg>直线</button>
                        <button class="tool" disabled><svg class="icon"><use href="#ptlen"/></svg>点加长度</button>
                        <button class="tool" disabled><svg class="icon"><use href="#arc"/></svg>三点画弧<i class="arrow"></i></button>
                        <label class="combo boxed"><select aria-label="画法" disabled><option></option></select></label>
                        <button class="tool" disabled><svg class="icon"><use href="#rect"/></svg>矩形</button>
                        <span class="sep"></span>
                        <button class="tool" disabled><svg class="icon"><use href="#smart"/></svg>智能布置<i class="arrow tight"></i></button>
                        <span class="sep"></span>
                        <button class="tool" disabled><svg class="icon"><use href="#beamg"/></svg>修改梁段属性</button>
                        <button class="tool" disabled><svg class="icon"><use href="#note"/></svg>原位标注<i class="arrow"></i></button>
                        <button class="tool" disabled><svg class="icon"><use href="#span"/></svg>重提梁跨<i class="arrow tight"></i></button>
                        <button class="tool" disabled><svg class="icon"><use href="#spancopy"/></svg>梁跨数据复制<i class="arrow"></i></button>
                        <button class="tool" disabled><svg class="icon"><use href="#support"/></svg>批量识别梁支座</button>
                        <button class="tool" disabled><svg class="icon"><use href="#beamg"/></svg>应用到同名梁</button>
                        <span class="more">»</span>
                    </div>
                    <span class="grip"></span>
                </div>

                <svg class="canvas" viewBox="415 172 1185 631">
                    <!-- grid axis and dimensions -->
                    <path d="M622 519L1112 466" stroke="#2c7a1c"/>
                    <path d="M660 515L1112 466" stroke="#c83c14" stroke-dasharray="5 14"/>
                    <g fill="none" stroke="#0c6d14">
                        <path d="M603 509h10l8 8v10l-8 8h-10l-8-8v-10z" stroke="#0c8d14" stroke-width="2"/>
                        <circle cx="675" cy="517" r="13"/><circle cx="742" cy="510" r="13"/><circle cx="764" cy="507" r="13"/><circle cx="830" cy="499" r="13"/><circle cx="896" cy="492" r="13"/><circle cx="929" cy="488" r="13"/><circle cx="997" cy="481" r="13"/><circle cx="1062" cy="474" r="13"/><circle cx="1129" cy="467" r="13"/>
                    </g>
                    <!-- upper storey -->
                    <g stroke="#5b0cab">
                        <path d="M652 443l8 73" stroke-width="8"/>
                        <path d="M719 435l7 72M742 432l7 74" stroke-width="7"/>
                        <path d="M808 425l7 73" stroke-width="6"/>
                        <path d="M873 424l7 67M907 420l6 67M973 413l7 67M1039 404l7 69M1105 392l8 74" stroke-width="5"/>
                        <path d="M845 455l3 40" stroke-width="3"/>
                    </g>
                    <path d="M655 445L1106 395M660 477L1111 428" stroke="#00b400" stroke-width="6"/>
                    <path d="M815 459l32-5" stroke="#5e8a4c"/>
                    <g class="dims">
                        <text x="671" y="522">1</text><text x="679" y="517">7800</text>
                        <text x="723" y="513">2</text><text x="733" y="511">700</text>
                        <text x="760" y="512">3</text><text x="768" y="508">7800</text>
                        <text x="828" y="504">4</text><text x="835" y="500">7800</text>
                        <text x="867" y="495">5</text><text x="877" y="495">3</text><text x="884" y="494">3200</text>
                        <text x="926" y="494">6</text><text x="934" y="489">7800</text>
                        <text x="992" y="486">7</text><text x="1000" y="482">7800</text>
                        <text x="1058" y="479">8</text><text x="1067" y="475">7800</text>
                        <text x="1124" y="472">9</text>
                        <text x="604" y="527">A</text>
                        <text transform="translate(636 540) rotate(-90)">62400</text>
                        <text transform="translate(649 534) rotate(-90)">7800</text>
                    </g>
                    <!-- footings -->
                    <g fill="#a8ac62">
                        <path d="M723 547v-3l14-4 20 1v4l-14 2z"/>
                        <path d="M788 542v-4l20-6 38-3h5v5l-25 4-30 4z"/>
                        <path d="M878 531v-4l14-4 20 1v4l-16 3z"/>
                        <path d="M922 526v-3l6-2 8 1v3l-7 1z"/>
                        <path d="M946 523v-3l12-4 17 2v2l-14 3z"/>
                        <path d="M979 519v-3l12-3 17 1v3l-14 2z"/>
                        <path d="M1044 513v-4l14-4 19 1v3l-15 3z"/>
                        <path d="M1110 505v-4l14-4 19 2v2l-15 3z"/>
                        <path d="M1179 498v-3l12-3 15 1v3l-12 1z"/>
                    </g>
                    <g stroke="#5b0cab" stroke-width="7">
                        <path d="M737 508l4 34M803 500l4 33M826 498l4 33M892 492l4 33"/>
                        <path d="M925 490l3 32" stroke-width="4"/>
                        <path d="M958 485l3 32M990 480l3 34M1056 473l4 32M1123 465l4 33M1189 458l4 34" stroke-width="6"/>
                    </g>
                    <!-- orbit ring -->
                    <g fill="none" stroke="#808080">
                        <circle cx="1007" cy="487" r="280"/><circle cx="1007" cy="207" r="17"/><circle cx="1287" cy="487" r="17"/><circle cx="1007" cy="767" r="17"/><circle cx="727" cy="487" r="17"/>
                    </g>
                    <path d="M474 752l-5-45" stroke="#0a7cff" stroke-width="4"/><path d="M467 699l5 15h-8z" fill="#0a7cff"/>
                    <path d="M474 751l40-4" stroke="#f00" stroke-width="4"/><path d="M526 746l-16-4 2 9z" fill="#f00"/>
                    <path d="M453 695h9l-9 11h10" fill="none" stroke="#1c5cb8"/><path d="M483 745l4 4 4-4M487 749v5" fill="none" stroke="#7c8a10"/>
                </svg>

                <div class="toolbar snapbar">
                    <div class="group">
                        <span class="grip"></span>
                        <button class="tool"><svg class="icon"><use href="#ortho"/></svg>正交</button>
                        <button class="tool active"><svg class="icon"><use href="#snap"/></svg>对象捕捉</button>
                        <button class="tool active"><svg class="icon"><use href="#dyninput"/></svg>动态输入</button>
                    </div>
                    <div class="group">
                        <span class="grip"></span>
                        <button class="tool"><svg class="icon"><use href="#xpt"/></svg>交点</button>
                        <button class="tool active"><svg class="icon"><use href="#perp"/></svg>垂点</button>
                        <button class="tool active"><svg class="icon"><use href="#midpt"/></svg>中点</button>
                        <button class="tool"><svg class="icon"><use href="#vertex"/></svg>顶点</button>
                        <button class="tool"><svg class="icon"><use href="#coord"/></svg>坐标</button>
                    </div>
                    <div class="group">
                        <span class="grip"></span>
                        <label class="combo small"><select aria-label="偏移方式"><option>不偏移</option></select></label>
                        <span class="sep"></span>
                        <label for="dx">X=</label>
                        <span class="spin"><input id="dx" type="text" value="0" disabled></span>
                        <span class="unit">mm</span>
                        <label for="dy">Y=</label>
                        <span class="spin"><input id="dy" type="text" value="0" disabled></span>
                        <span>mm</span>
                        <span class="sep"></span>
                        <input id="rot" type="checkbox"><label for="rot" class="dark">旋转</label>
                        <span class="spin wide"><input type="text" value="0.000" aria-label="旋转角度" disabled></span>
                        <span>°</span>
                    </div>
                </div>
            </section>
        </main>

        <footer class="status">
            <span class="xy">X=5375 Y=-4099418</span>
            <span class="height">层高:4.87m</span>
            <span class="base">底标高:0m</span>
            <span class="count">0</span>
            <span class="rest"></span>
            <div class="ime">
                <svg class="icon"><use href="#sogou"/></svg>
                <b>A</b>
                <svg class="icon" viewBox="0 0 16 16"><path d="M10 1c2 7-2 11-8 11 7 6 15-2 8-11z" fill="#4689d0"/></svg>
                <svg class="icon" viewBox="0 0 16 16"><circle cx="5" cy="5" r="1.5" fill="none" stroke="#4689d0"/><path d="M11 10q2 2-1 4" stroke="#4689d0" stroke-width="2" fill="none"/></svg>
                <svg class="icon" viewBox="0 0 16 16"><path d="M0 3h16v11H0z" fill="#4689d0"/><path d="M2 6h12M2 9h12M4 12h8" stroke="#fff" stroke-dasharray="2 1"/></svg>
                <svg class="icon" viewBox="0 0 16 16"><circle cx="8" cy="4" r="3" fill="#999"/><path d="M4 15V9l4-2 4 2v6z" fill="#999"/></svg>
                <svg class="icon" viewBox="0 0 16 16"><path d="M2 14l7-7" stroke="#4689d0" stroke-width="3"/><path d="M8 3l4-2-1 4 2 1 2-3c2 5-3 8-6 6z" fill="#4689d0"/></svg>
            </div>
        </footer>

        <div class="taskbar">
            <button class="app sys" aria-label="开始"><svg viewBox="0 0 24 24"><path d="M4 6l7-1v6.500H4zM12 5l9-1.500v8h-9zM4 12.500h7V19l-7-1zM12 12.500h9v8L12 19z" fill="#fff"/></svg></button>
            <button class="app sys" aria-label="Cortana"><svg viewBox="0 0 24 24"><circle cx="12" cy="12" r="7" fill="none" stroke="#fff" stroke-width="2"/></svg></button>
            <button class="app sys" aria-label="任务视图"><svg viewBox="0 0 24 24"><path d="M6 5h12v14H6zM4 7H2.500v10H4M20 7h1.500v10H20" fill="none" stroke="#fff" stroke-width="1.2"/></svg></button>
            <button class="app sys" aria-label="通知"><svg viewBox="0 0 24 24"><path d="M15 9a6 6 0 1 0 1 7M13 10a3.500 3.500 0 1 0 1 5c1-2-1-3-3-2M8 7c5-2 10 3 8 9" fill="none" stroke="#aaa" stroke-width="1.2"/><path d="M14 8c1 0 1-7 5-7s4 6 5 7zM17 9h3v2h-3z" fill="#f5b400"/></svg></button>
            <span class="divider"></span>
            <button class="app open" aria-label="浏览器"><svg viewBox="0 0 24 24"><circle cx="12" cy="12" r="11" fill="#3e9ee0" stroke="#bfe0f6" stroke-width="1.5"/><path d="M6 12.500h12a6 6 0 1 0-1.500 4" fill="none" stroke="#fff" stroke-width="3"/></svg></button>
            <button class="app open" aria-label="资源管理器"><svg viewBox="0 0 24 24"><path d="M1 3h8l2 2h12v16H1z" fill="#f8d775"/><path d="M4 22v-8h16v8h-4v-4H8v4z" fill="#3aa0d8"/></svg></button>
            <button class="app open" aria-label="CAD"><svg viewBox="0 0 24 24"><rect x="1" y="1" width="22" height="22" rx="2" fill="#1d62b5" stroke="#9cb8d8"/><path d="M9 9H4.500v7H9M10 16l2-8 2 8M11 13h3M16 9v7h3l1-1.500v-4L19 9z" fill="none" stroke="#fff" stroke-width="1.4"/></svg></button>
            <button class="app open current" aria-label="钢筋算量"><svg viewBox="0 0 24 24"><rect width="24" height="24" rx="4" fill="#0d8cf0"/><path d="M11 20V7a3 3 0 0 1 5-2M5 11h14M5 11c0 4 2 5 4 5h6c3 0 4-1 4-3" fill="none" stroke="#fff" stroke-width="2"/></svg></button>
            <button class="app open" aria-label="图形算量"><svg viewBox="0 0 24 24"><rect width="24" height="24" rx="4" fill="#27bb60"/><path d="M8 5v14M5 5h5M5 19h5M8 12h11M19 10v4" fill="none" stroke="#fff" stroke-width="2"/></svg></button>
            <button class="app open" aria-label="聊天"><svg viewBox="0 0 24 24"><circle cx="12" cy="12" r="11.5" fill="#151a20"/><path d="M1 12h22a11 11 0 0 1-22 0z" fill="#4a5f7c"/><path d="M8 1h8v7l2 13H7L9 8z" fill="#9fb0b4"/><circle cx="12" cy="5" r="2.5" fill="#3a2c28"/></svg></button>

            <div class="tray">
                <span class="temp">61℃<br>CPU温度</span>
                <svg viewBox="0 0 16 16"><path d="M1 6q7-6 14 0M3 9q5-4 10 0M5.500 12q2.500-2 5 0" fill="none" stroke="#fff" stroke-width="1.4"/><circle cx="8" cy="14" r="1.2" fill="#fff"/></svg>
                <svg viewBox="0 0 16 16"><path d="M2 11l6-6 6 6" fill="none" stroke="#fff" stroke-width="1.3"/></svg>
                <svg viewBox="0 0 16 16"><path d="M7 1h2v3l5 1-2 3v6H4V8L2 6l5-2z" fill="#c92a2a"/><ellipse cx="8" cy="11" rx="3" ry="4" fill="#fff"/><path d="M5 15h6" stroke="#f0a020" stroke-width="1.5"/></svg>
                <svg viewBox="0 0 16 16"><circle cx="8" cy="8" r="8" fill="#e9d21c"/><path d="M8 0a8 8 0 0 1 0 16c5-4 4-10 0-16z" fill="#58a827"/><path d="M8 4v8M4 8h8" stroke="#1c5a12" stroke-width="2"/></svg>
                <svg viewBox="0 0 16 16"><path d="M4 6h10v7H4zM14 8h2v3h-2z" fill="#fff"/><path d="M1 3v4h4V3M3 7v3" stroke="#fff" fill="none"/></svg>
                <svg viewBox="0 0 16 16"><path d="M4 3h11.500v8H4M8 14h5M10 11v3M.5 2h3v4h-3zM2 6v7" fill="none" stroke="#ddd"/></svg>
                <svg viewBox="0 0 16 16"><path d="M1 6h2l4-3v10l-4-3H1zM10 6l4 4M14 6l-4 4" fill="none" stroke="#fff"/></svg>
                <svg class="s" viewBox="0 0 16 16"><use href="#sogou"/></svg>
                <span class="clock">8:07<br>2017/3/13</span>
                <div class="notice"><svg viewBox="0 0 16 16"><path d="M0 0h16v12H7l-3 4v-4H0z" fill="#fff"/><path d="M3 3h10M3 6h10M3 9h7" stroke="#222"/></svg><b>3</b></div>
            </div>
        </div>
    </div>
</body>
</html>
```
FILE: styles.css
```css
* {
    box-sizing: border-box;
}

body {
    margin: 0;
    font-family: "Open Sans", "Noto Sans CJK SC", sans-serif;
    font-size: 13px;
    line-height: 16px;
    color: #1a1a1a;
    background: #f0f0f0;
}

button, input, select {
    font: inherit;
    color: inherit;
    margin: 0;
    padding: 0;
    border: 0;
    background: none;
}

.sprite {
    display: none;
}

.icon {
    width: 16px;
    height: 16px;
    flex: none;
}

.window {
    display: flex;
    flex-direction: column;
    height: 100vh;
    overflow: hidden;
}

/* title bar */
.titlebar {
    position: relative;
    display: flex;
    align-items: center;
    gap: 5px;
    height: 24px;
    padding-left: 2px;
    background: #fff;
}

.titlebar h1 {
    margin: 0;
    font-size: 13px;
    font-weight: normal;
    white-space: nowrap;
}

.ball {
    position: absolute;
    left: 76%;
    top: -28px;
    z-index: 2;
    width: 46px;
    height: 46px;
    margin-left: -24px;
    padding-top: 26px;
    border-radius: 50%;
    border: 1px solid #e0f2e0;
    background: #3fc653;
    box-shadow: 0 2px 6px rgba(0, 0, 0, 0.5);
    color: #fff;
    font-size: 11px;
    font-weight: bold;
    text-align: center;
}

.gauge {
    position: absolute;
    left: 1287px;
    top: 0;
    width: 62px;
    height: 10px;
    border: 3px solid #4c5663;
    background: linear-gradient(90deg, #3f86a8 40%, #20262e 40%);
}

.winbuttons {
    display: flex;
    margin-left: auto;
    padding-right: 3px;
}

.winbuttons button {
    width: 47px;
    height: 24px;
}

.winbuttons svg {
    width: 12px;
    height: 12px;
}

/* menu */
.menubar {
    display: flex;
    align-items: center;
    height: 28px;
    padding-left: 2px;
    white-space: nowrap;
}

.menubar > button {
    padding: 0 5px;
}

.menubar > .tool {
    padding: 0 2px 0 5px;
}

.account {
    display: flex;
    align-items: center;
    gap: 1px;
    height: 26px;
    margin-left: auto;
    padding: 0 2px 0 30px;
    background: linear-gradient(90deg, #fbfbfb, #f3f3f3);
}

/* toolbars */
.toolbar {
    display: flex;
    align-items: center;
    height: 30px;
    flex: none;
    overflow: hidden;
    white-space: nowrap;
}

.toolbar.edit {
    height: 28px;
}

.group {
    display: flex;
    align-items: center;
    height: 27px;
    background: linear-gradient(#fdfdfd, #f3f3f3);
}

.tool {
    display: flex;
    align-items: center;
    gap: 4px;
    height: 24px;
    padding: 0 3px;
    white-space: nowrap;
}

.edit .tool {
    padding-right: 4px;
}

.tool:disabled {
    color: #999;
}

.tool.active {
    margin: 0 -1px;
    border: 1px solid #4a94d6;
    background: #dcebf9;
}

.arrow {
    flex: none;
    width: 6px;
    margin-right: 4px;
    border: 3px solid transparent;
    border-top: 4px solid #222;
    border-bottom: 0;
}

.arrow.tight {
    margin: 0 -1px 0 -2px;
}

.tool:disabled .arrow {
    border-top-color: #888;
}

.sep {
    width: 1px;
    height: 18px;
    margin: 0 3px;
    background: #c4c4c4;
    flex: none;
}

.grip {
    flex: none;
    width: 2px;
    height: 18px;
    margin: 0 2px 0 5px;
    background: repeating-linear-gradient(#aaa 0 2px, transparent 2px 4px);
}

.more {
    margin: 0 8px 10px auto;
    font-size: 16px;
    font-weight: bold;
}

.top .group {
    height: 29px;
}

.file {
    width: 161px;
    padding-left: 2px;
}

.common {
    width: 735px;
}

.combo {
    display: flex;
    align-items: center;
    width: 75px;
    height: 24px;
    padding: 0 3px;
    background: #fff;
}

.combo.small {
    width: 62px;
}

.combo select {
    flex: 1;
    min-width: 0;
    appearance: none;
    overflow: hidden;
    text-overflow: clip;
    color: #222;
    opacity: 1;
}

.combo::after {
    content: "";
    margin: 0 2px 0 8px;
    border: 3px solid transparent;
    border-top: 4px solid #222;
    border-bottom: 0;
}

.combo.boxed {
    width: 58px;
    margin-right: 2px;
    border: 1px solid #8a8a8a;
    background: #f6f6f6;
}

.combo.boxed::after {
    margin-right: 0;
    border-top-color: #777;
}

/* panels */
main {
    display: flex;
    flex: 1;
    min-height: 0;
    padding-top: 2px;
}

.panel {
    display: flex;
    flex-direction: column;
    flex: none;
}

.nav {
    width: 171px;
    margin-right: 5px;
    padding-bottom: 3px;
}

.list {
    width: 236px;
    margin-right: 3px;
    padding-bottom: 3px;
}

.panel-head {
    display: flex;
    align-items: center;
    gap: 7px;
    height: 17px;
    padding-right: 3px;
    border: 1px solid #a0a0a0;
}

.panel-head span {
    flex: 1;
}

.panel-head svg {
    width: 12px;
    height: 12px;
}

.panel-head.blue {
    border-color: #0a50dc;
    background: #0a50dc;
    color: #fff;
}

.section {
    height: 23px;
    border: 1px solid #a8a8a8;
    border-top-color: #fff;
    background: #f0f0f0;
}

.nav-tools {
    display: flex;
    align-items: center;
    gap: 6px;
    height: 30px;
    padding: 4px 6px 0;
}

.nav-tools button, .nav-tools svg {
    width: 18px;
    height: 16px;
}

.list-tools {
    display: flex;
    align-items: center;
    gap: 2px;
    height: 28px;
    padding-left: 3px;
}

.search {
    display: flex;
    height: 27px;
    padding: 1px 1px;
}

.search input {
    flex: 1;
    min-width: 0;
    padding: 0 3px;
    border: 1px solid #8a8a8a;
    background: #fff;
}

.search input::placeholder {
    color: #888;
}

.search button {
    display: flex;
    align-items: center;
    justify-content: center;
    width: 26px;
}

/* trees */
.tree {
    display: flex;
    flex-direction: column;
    flex: 1;
    min-height: 0;
    margin: 0;
    overflow: hidden;
    list-style: none;
    border: 1px solid #9a9a9a;
    background: #fff;
    font-family: "Liberation Serif", "Noto Sans CJK SC", serif;
    white-space: nowrap;
}

.tree li {
    display: flex;
    align-items: center;
    flex: 1;
    min-height: 14px;
    line-height: 14px;
}

.caret {
    width: 10px;
    height: 10px;
}

.child::before {
    content: "";
    align-self: stretch;
    width: 10px;
    border-left: 1px dotted #aaa;
    background: repeating-linear-gradient(90deg, #aaa 0 1px, transparent 1px 2px) 0 50% / 100% 1px no-repeat;
}

.child span {
    display: flex;
    align-items: center;
    align-self: stretch;
}

.nav-tree {
    margin: 0 2px;
    padding: 1px 0 125px 7px;
}

.nav-tree > li > .icon {
    margin: 0 6px 0 7px;
}

.nav-tree .cad {
    margin: 0 1px 0 4px;
}

.new {
    margin-bottom: 5px;
    color: #e0b400;
    font: italic bold 11px "Open Sans", sans-serif;
    text-shadow: 1px 1px 0 #5a4800;
}

.nav-tree .child {
    margin-left: 6px;
    padding-left: 19px;
    border-left: 1px dotted #bbb;
}

.nav-tree .child span {
    gap: 4px;
    padding: 0 6px 0 1px;
}

.current span {
    background: #d9d9d9;
}

.list-tree {
    padding: 2px 0 25px 9px;
}

.list-tree > li > .icon {
    margin: 0 5px 0 8px;
}

.list-tree .child {
    padding-left: 25px;
}

.list-tree .child span {
    gap: 7px;
    padding: 0 3px 0 1px;
}

.gear {
    width: 13px;
    height: 13px;
}

.selected span {
    background: #2f66c4;
    color: #0a1430;
}

/* drawing area */
.work {
    display: flex;
    flex-direction: column;
    flex: 1;
    min-width: 0;
}

.canvas {
    flex: 1;
    min-height: 0;
    width: 100%;
    background: #000;
}

.dims text {
    fill: #d0d0d0;
    font: 15px "Liberation Sans", sans-serif;
}

.snapbar {
    height: 34px;
    padding-bottom: 2px;
    color: #888;
}

.snapbar .tool, .snapbar .dark, .snapbar .combo {
    color: #1a1a1a;
}

.snapbar .active {
    margin: 0;
}

.snapbar .spin {
    display: flex;
    width: 60px;
    height: 24px;
    margin: 0 2px 0 4px;
    border: 1px solid #8a8a8a;
}

.snapbar .wide {
    width: 70px;
}

.spin input {
    flex: 1;
    min-width: 0;
    text-align: right;
    color: #888;
}

.spin::after {
    content: "▴\A▾";
    width: 16px;
    padding-left: 5px;
    white-space: pre;
    font-size: 10px;
    line-height: 11px;
    color: #666;
}

.unit {
    margin-right: 4px;
}

.snapbar input[type="checkbox"] {
    appearance: none;
    width: 12px;
    height: 12px;
    margin: 0 8px 0 2px;
    border: 1px solid #999;
    background: #fff;
}

/* status bar */
.status {
    display: flex;
    flex: none;
    gap: 2px;
    height: 21px;
    font-family: "Liberation Serif", "Noto Sans CJK SC", serif;
}

.status span {
    padding: 2px;
    border: 1px solid #ddd;
    background: linear-gradient(#fff, #f3f3f3);
}

.xy {
    width: 154px;
}

.height {
    width: 82px;
}

.base {
    width: 102px;
}

.count {
    width: 49px;
}

.rest {
    flex: 1;
}

.ime {
    display: flex;
    align-items: center;
    justify-content: space-between;
    width: 150px;
    padding: 0 3px;
    border: 1px solid #9fb6d0;
    background: #f4f9ff;
}

.ime b {
    color: #3f80c8;
    font: bold 18px "Liberation Sans", sans-serif;
}

/* taskbar */
.taskbar {
    display: flex;
    flex: none;
    height: 42px;
    background: #080a0a;
    color: #fff;
}

.app {
    display: flex;
    align-items: center;
    justify-content: center;
}

.app svg {
    width: 24px;
    height: 24px;
}

.app.sys {
    width: 49px;
}

.app.open {
    border-bottom: 3px solid #76b0e0;
    width: 43px;
    margin: 0 4px 0 5px;
    padding-top: 2px;
}

.app.current {
    width: 50px;
    margin: 0 1px;
    background: #3a3d3d;
}

.divider {
    width: 4px;
    height: 22px;
    margin: 10px 7px 0 2px;
    border: 1px solid #444;
    border-width: 0 1px;
}

.tray {
    display: flex;
    align-items: center;
    gap: 9px;
    margin-left: auto;
    padding-right: 25px;
    text-align: center;
    line-height: 18px;
}

.tray svg {
    width: 16px;
    height: 16px;
}

.temp {
    margin-right: 9px;
}

.tray .s {
    margin: 0 10px 0 6px;
}

.clock {
    margin-right: 14px;
}

.notice {
    position: relative;
    display: flex;
}

.notice b {
    position: absolute;
    left: 8px;
    top: 6px;
    width: 15px;
    height: 15px;
    border: 1px solid #888;
    border-radius: 50%;
    background: #222;
    font-size: 11px;
    line-height: 13px;
}
```
